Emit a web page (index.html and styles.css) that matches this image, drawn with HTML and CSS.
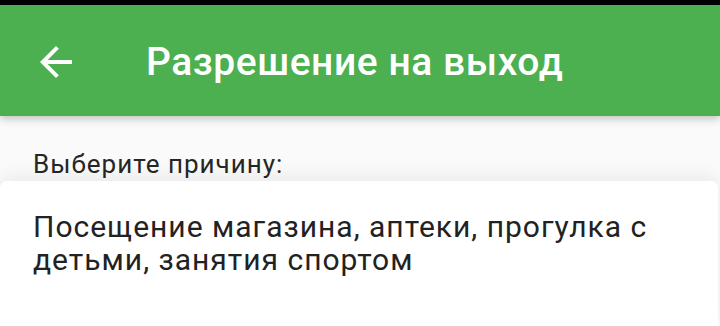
FILE: index.html
```html
<!DOCTYPE html>
<html lang="ru">
<head>
<meta charset="utf-8">
<title>Разрешение на выход</title>
<link rel="stylesheet" href="styles.css">
</head>
<body>
<div class="status-bar"></div>
<header class="app-bar">
  <button class="back" aria-label="Назад">
    <svg viewBox="0 0 24 24" width="48" height="48"><path fill="#fff" d="M20 11H7.83l5.59-5.59L12 4l-8 8 8 8 1.41-1.41L7.83 13H20v-2z"/></svg>
  </button>
  <h1 class="title">Разрешение на выход</h1>
</header>
<main class="content">
  <p class="label">Выберите причину:</p>
  <div class="card">
    <p class="option">Посещение магазина, аптеки, прогулка с детьми, занятия спортом</p>
  </div>
</main>
</body>
</html>
```
FILE: styles.css
```css
html, body {
  margin: 0;
  padding: 0;
  height: 100%;
}
body {
  background: #fafafa;
  font-family: Roboto, "Noto Sans", sans-serif;
  overflow: hidden;
  display: flex;
  flex-direction: column;
}
.status-bar {
  height: 5px;
  background: #000;
}
.app-bar {
  position: relative;
  z-index: 2;
  height: 111px;
  background: #4caf50;
  display: flex;
  align-items: center;
  box-shadow: 0 3px 8px rgba(0,0,0,0.22);
}
.back {
  margin-left: 32px;
  padding: 0;
  border: 0;
  background: none;
  width: 48px;
  height: 48px;
  display: flex;
  margin-top: 2px;
}
.title {
  margin: 2px 0 0 66px;
  font-size: 39px;
  font-weight: 500;
  color: #fff;
  letter-spacing: 0.55px;
}
.content {
  flex: 1;
  display: flex;
  flex-direction: column;
}
.label {
  margin: 33px 0 0 33px;
  font-size: 26px;
  color: #262626;
  letter-spacing: 1px;
}
.card {
  flex: 1;
  margin: 2px 2px 0 0;
  background: #fff;
  border-radius: 7px 7px 0 0;
  box-shadow: 0 -4px 18px rgba(0,0,0,0.07);
  padding: 29px 20px 0 33px;
}
.option {
  margin: 0;
  font-size: 30px;
  line-height: 33px;
  color: #222;
  letter-spacing: 1px;
}
```
